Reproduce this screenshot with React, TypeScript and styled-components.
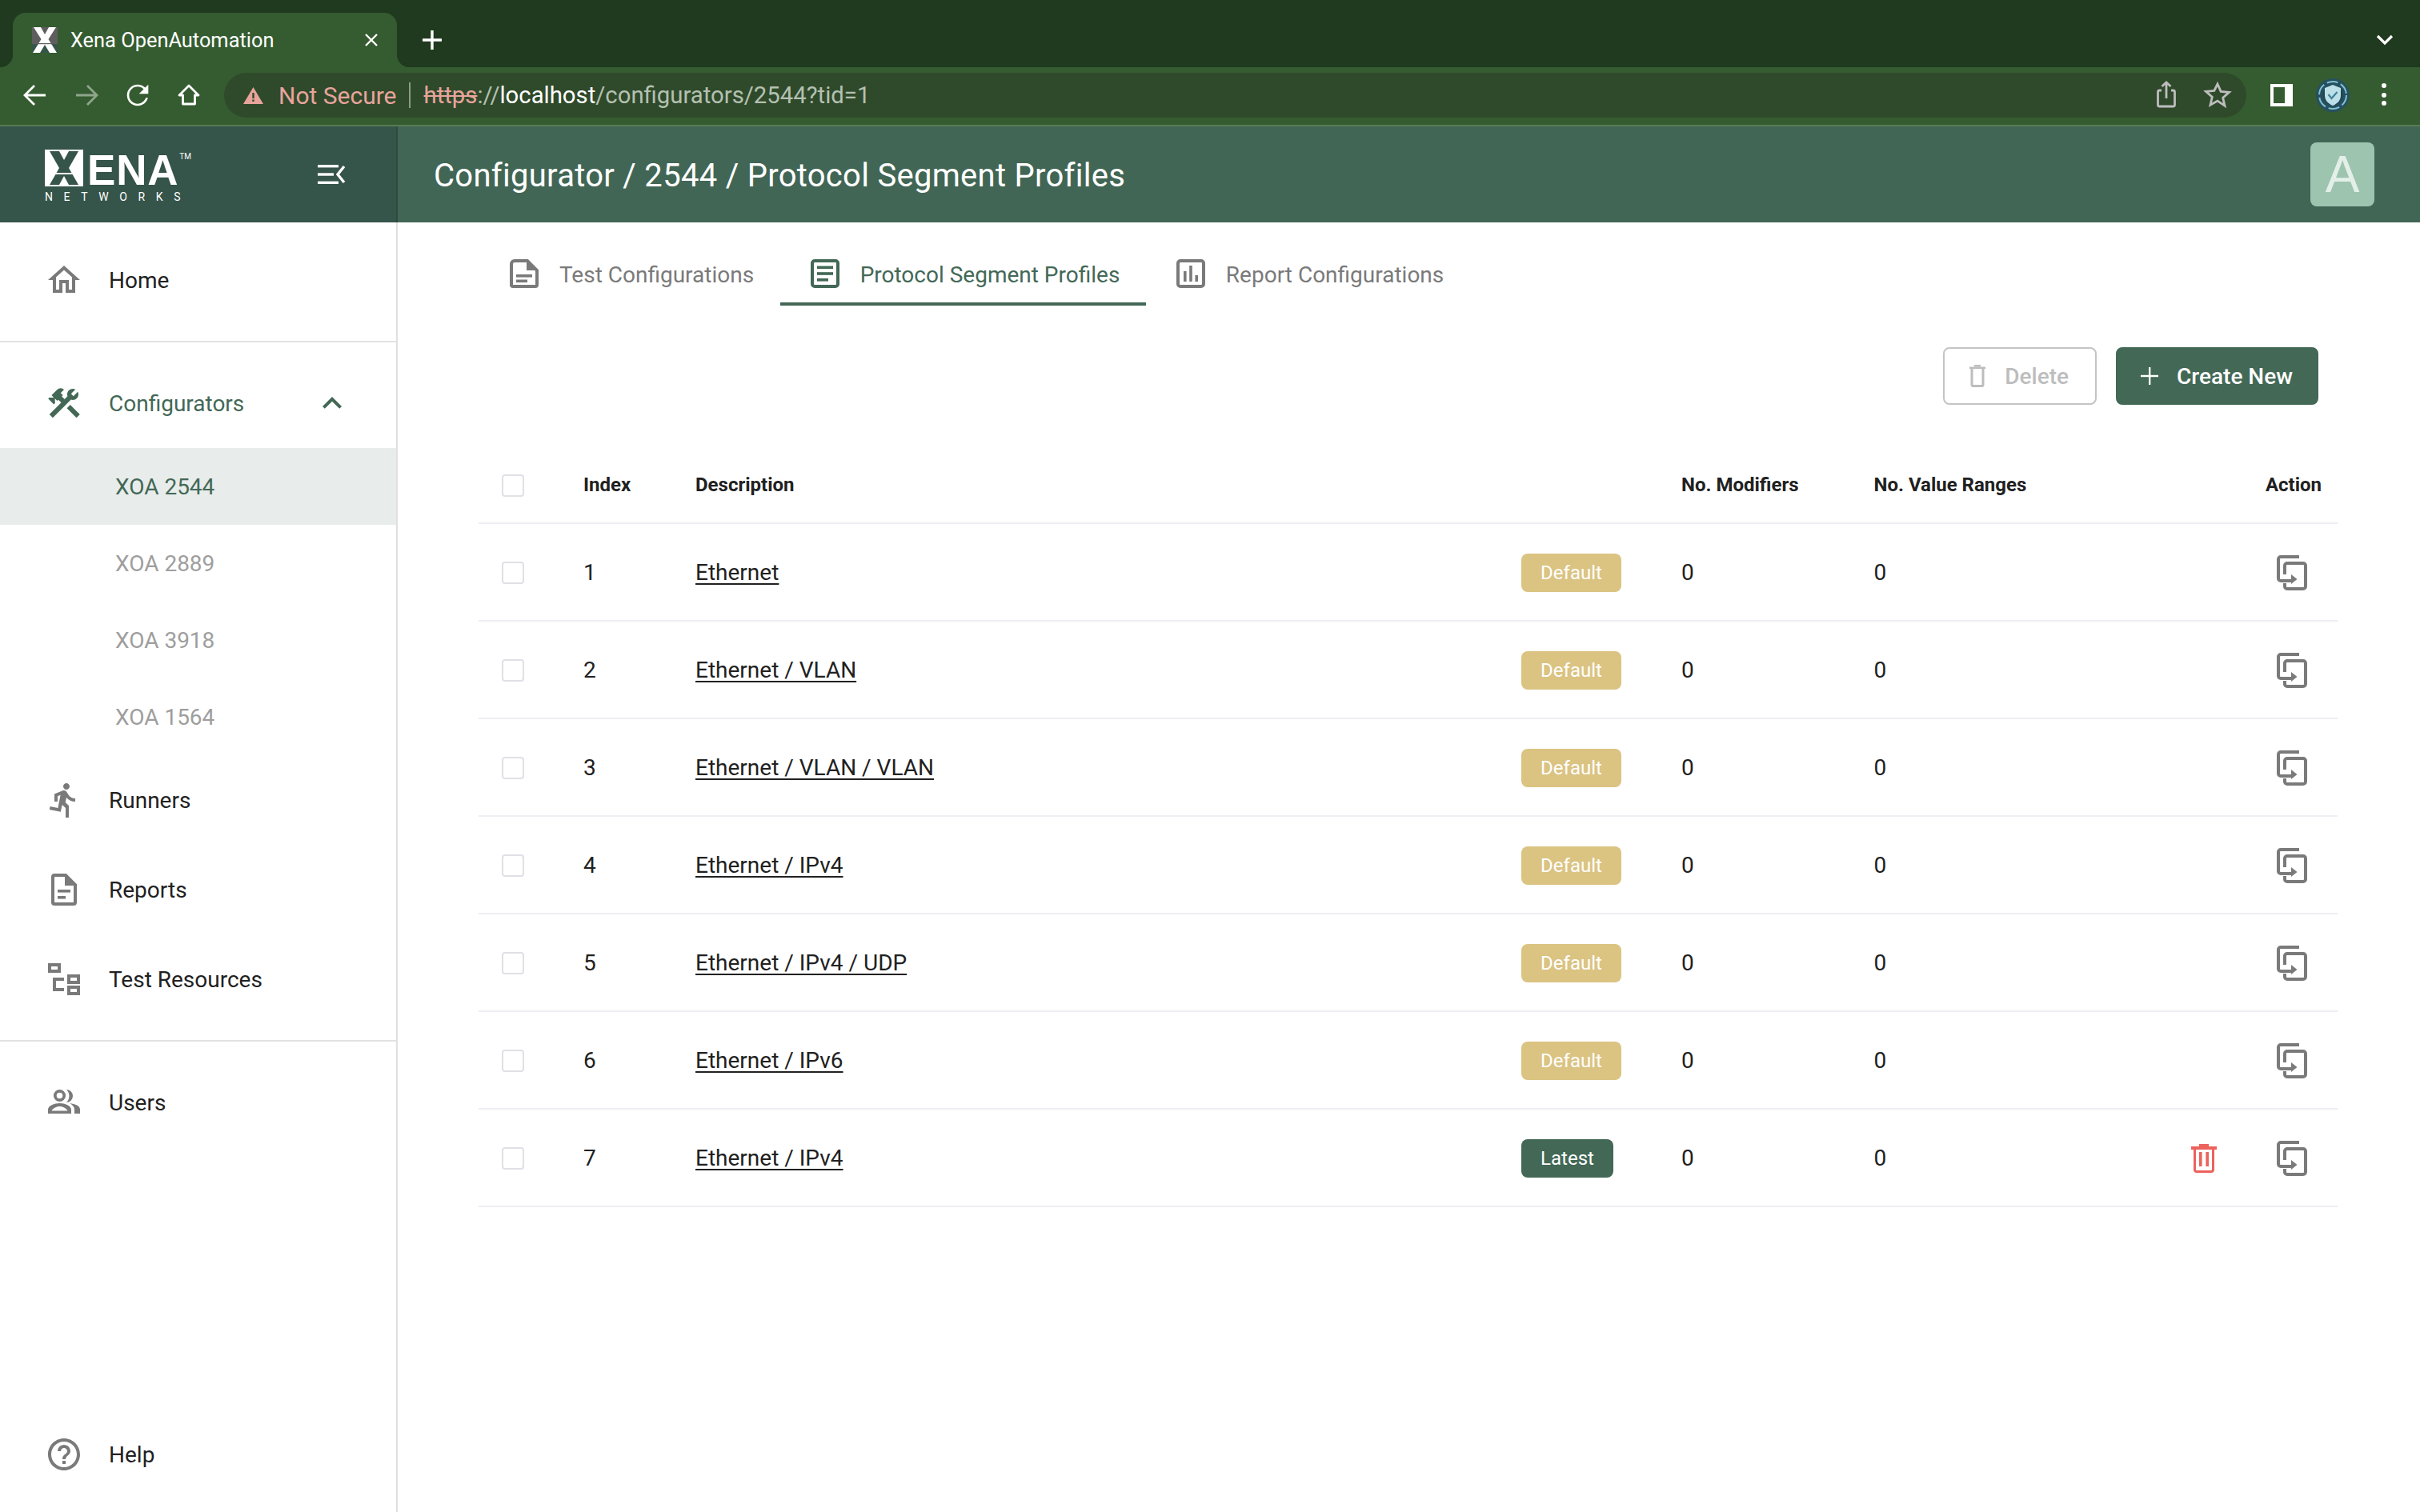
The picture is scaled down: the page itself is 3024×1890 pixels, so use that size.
import styled, { createGlobalStyle } from "styled-components";
import { MdConstruction, MdDirectionsRun, MdExpandLess, MdHelpOutline, MdOutlineHome } from "react-icons/md";

const GlobalStyle = createGlobalStyle`
    html, body {
        margin: 0;
        padding: 0;
        background: #fff;
        overflow: hidden;
    }
    * {
        box-sizing: border-box;
    }
`;

const Page = styled.div`
    width: 3024px;
    height: 1890px;
    display: flex;
    flex-direction: column;
    font-family: Roboto, "Liberation Sans", sans-serif;
    font-size: 28px;
    color: #212121;
`;

/* browser chrome */
const TabStrip = styled.div`
    height: 84px;
    flex: none;
    display: flex;
    align-items: flex-end;
    padding: 0 24px 0 16px;
    background: #203a1f;
    color: #fff;
`;

const BrowserTab = styled.div`
    position: relative;
    width: 480px;
    height: 68px;
    display: flex;
    align-items: center;
    gap: 16px;
    padding: 0 20px 0 24px;
    background: #355c30;
    border-radius: 16px 16px 0 0;
    font-size: 25.4px;

    &::before,
    &::after {
        content: "";
        position: absolute;
        bottom: 0;
        width: 16px;
        height: 16px;
    }
    &::before {
        right: 100%;
        background: radial-gradient(circle at 0 0, transparent 16px, #355c30 16.5px);
    }
    &::after {
        left: 100%;
        background: radial-gradient(circle at 100% 0, transparent 16px, #355c30 16.5px);
    }
`;

const TabClose = styled.svg`
    margin-left: auto;
    width: 24px;
    height: 24px;
`;

const StripButton = styled.svg<{ $push?: boolean }>`
    align-self: center;
    flex: none;
    width: 40px;
    height: 40px;
    margin-left: ${({ $push }) => ($push ? "auto" : "24px")};
    margin-top: 16px;
`;

const Toolbar = styled.div`
    height: 74px;
    flex: none;
    display: flex;
    align-items: center;
    gap: 24px;
    padding: 0 25px 2px 24px;
    background: #355c30;
    border-bottom: 2px solid #587c53;
`;

const ToolIcon = styled.svg`
    flex: none;
    width: 40px;
    height: 40px;
`;

const ExtensionIcon = styled.svg`
    flex: none;
    width: 44px;
    height: 44px;
    margin: 0 -2px;
`;

const Omnibox = styled.div`
    flex: 1;
    height: 56px;
    display: flex;
    align-items: center;
    padding: 0 16px 0 24px;
    border-radius: 28px;
    background: #2f4a2a;
    font-size: 29.3px;
    color: #b4c0b1;
    white-space: nowrap;
`;

const NotSecure = styled.span`
    margin-left: 19px;
    font-size: 30px;
    color: #e8a49c;
`;

const UrlDivider = styled.span`
    width: 2px;
    height: 32px;
    margin: 0 17px 0 15px;
    background: #8a9b86;
`;

const Struck = styled.span`
    color: #e8a49c;
    text-decoration: line-through;
`;

const Host = styled.span`
    color: #fff;
`;

const OmniActions = styled.div`
    margin-left: auto;
    display: flex;
    gap: 24px;
`;

/* app header */
const AppHeader = styled.header`
    height: 120px;
    flex: none;
    display: flex;
    background: #426655;
    color: #fff;
`;

const Brand = styled.div`
    width: 497px;
    flex: none;
    display: flex;
    align-items: center;
    justify-content: space-between;
    padding: 0 62px 0 56px;
    background: #35544a;
    border-right: 2px solid #2e4a40;
`;

const Logo = styled.div`
    display: flex;
    flex-direction: column;
    gap: 7px;
    margin-top: 2px;
`;

const LogoMark = styled.div`
    display: flex;
    align-items: flex-start;
    gap: 5px;
    height: 46px;
`;

const LogoWord = styled.span`
    font-family: "Liberation Sans", Arial, sans-serif;
    font-size: 53px;
    font-weight: 700;
    line-height: 52px;
    height: 46px;
    letter-spacing: 0.8px;
`;

const LogoTm = styled.span`
    font-size: 10px;
    line-height: 18px;
    margin-left: -4px;
`;

const LogoNetworks = styled.span`
    font-size: 14px;
    line-height: 12px;
    letter-spacing: 13.6px;
`;

const PageTitle = styled.h1`
    flex: 1;
    margin: 2px 0 0;
    padding-left: 45px;
    align-self: center;
    font-size: 40px;
    font-weight: 400;
    letter-spacing: 0.29px;
`;

const Avatar = styled.div`
    width: 80px;
    height: 80px;
    align-self: center;
    margin-right: 57px;
    display: flex;
    align-items: center;
    justify-content: center;
    border-radius: 8px;
    background: #9cc4ae;
    color: #e4efe9;
    font-family: "Liberation Sans", Arial, sans-serif;
    font-size: 64px;
`;

/* page body */
const Body = styled.div`
    flex: 1;
    display: flex;
    min-height: 0;
`;

const Sidebar = styled.nav`
    width: 497px;
    flex: none;
    display: flex;
    flex-direction: column;
    border-right: 2px solid #e0e0e0;
`;

const NavGroup = styled.div<{ $top: number; $bottom: number; $divided?: boolean }>`
    padding: ${({ $top, $bottom }) => `${$top}px 0 ${$bottom}px`};
    border-bottom: ${({ $divided }) => ($divided ? "2px solid #e2e2e2" : "none")};
`;

const NavRow = styled.div<{ $active?: boolean }>`
    height: 112px;
    display: flex;
    align-items: center;
    gap: 32px;
    padding: 0 56px;
    color: ${({ $active }) => ($active ? "#436856" : "#212121")};

    svg {
        flex: none;
        width: 48px;
        height: 48px;
        color: ${({ $active }) => ($active ? "#436856" : "#7a7a7a")};
    }
`;

const NavChevron = styled.span`
    margin-left: auto;
    display: flex;
`;

const SubItem = styled.div<{ $active?: boolean }>`
    height: 96px;
    display: flex;
    align-items: center;
    padding-left: 144px;
    background: ${({ $active }) => ($active ? "#e8ecea" : "transparent")};
    color: ${({ $active }) => ($active ? "#436856" : "#9e9e9e")};
`;

const HelpGroup = styled.div`
    margin-top: auto;
    padding-bottom: 16px;
`;

const Main = styled.main`
    flex: 1;
    min-width: 0;
    padding: 0 103px 0 100px;
`;

const Tabs = styled.div`
    display: flex;
    padding: 46px 0 0 2px;
`;

const TabItem = styled.div<{ $active?: boolean }>`
    display: flex;
    align-items: flex-start;
    gap: 26px;
    height: 58px;
    padding: 0 32.5px 0 38px;
    line-height: 39px;
    color: ${({ $active }) => ($active ? "#436856" : "#7a7a7a")};
    border-bottom: 4px solid ${({ $active }) => ($active ? "#436856" : "transparent")};

    svg {
        flex: none;
        width: 36px;
        height: 36px;
    }
`;

const Actions = styled.div`
    display: flex;
    justify-content: flex-end;
    gap: 24px;
    margin-top: 52px;
    padding-right: 24px;
`;

const ActionButton = styled.button<{ $primary?: boolean }>`
    height: 72px;
    display: flex;
    align-items: center;
    gap: ${({ $primary }) => ($primary ? "23px" : "24px")};
    padding: ${({ $primary }) => ($primary ? "0 30px 0 29px" : "0 33px 0 31px")};
    border-radius: 8px;
    border: 2px solid ${({ $primary }) => ($primary ? "#436856" : "#c4c4c4")};
    background: ${({ $primary }) => ($primary ? "#436856" : "#fff")};
    color: ${({ $primary }) => ($primary ? "#fff" : "#bdbdbd")};
    font-family: inherit;
    font-size: 28px;
    font-weight: 500;
`;

const Table = styled.div`
    margin: 52px 0 0 1px;
`;

const Row = styled.div<{ $head?: boolean }>`
    height: ${({ $head }) => ($head ? "97px" : "122px")};
    display: grid;
    grid-template-columns: 102px 140px 1032px 200px 240.5px 1fr auto;
    align-items: center;
    padding-left: 29px;
    border-bottom: 2px solid #eeedf3;
    font-size: ${({ $head }) => ($head ? "24px" : "28px")};
    font-weight: ${({ $head }) => ($head ? 700 : 400)};
`;

const Check = styled.span`
    width: 28px;
    height: 28px;
    margin-top: 2px;
    border: 2px solid #e0e0e6;
    border-radius: 4px;
`;

const ProfileLink = styled.a`
    color: #212121;
    text-decoration: underline;
    text-underline-offset: 4px;
    text-decoration-thickness: 2px;
`;

const Badge = styled.span<{ $latest?: boolean }>`
    justify-self: start;
    height: 48px;
    width: ${({ $latest }) => ($latest ? "115px" : "125px")};
    margin-top: 2px;
    display: flex;
    align-items: center;
    justify-content: center;
    border-radius: 8px;
    background: ${({ $latest }) => ($latest ? "#436856" : "#dbc382")};
    color: #fff;
    font-size: 24px;
`;

const HeadAction = styled.span`
    padding-right: 20px;
    text-align: right;
`;

const RowActions = styled.span`
    display: flex;
    justify-content: flex-end;
    align-items: center;
    gap: 75px;
    margin-top: 2px;
    padding-right: 38px;
`;

const DocIcon = () => (
    <svg viewBox="0 0 36 36">
        <path
            d="M6 2h16l12 12v18a2 2 0 0 1-2 2H4a2 2 0 0 1-2-2V6a4 4 0 0 1 4-4z"
            fill="none"
            stroke="currentColor"
            strokeWidth="4"
        />
        <path d="M21 2l13 12H21z" fill="currentColor" />
        <rect x="8" y="19" width="20" height="3.6" fill="currentColor" />
        <rect x="8" y="25.5" width="14" height="3.6" fill="currentColor" />
    </svg>
);

const ArticleIcon = () => (
    <svg viewBox="0 0 36 36">
        <rect x="2" y="2" width="32" height="32" rx="3" fill="none" stroke="currentColor" strokeWidth="4" />
        <rect x="8" y="8.5" width="20" height="3.6" fill="currentColor" />
        <rect x="8" y="16.2" width="20" height="3.6" fill="currentColor" />
        <rect x="8" y="24" width="14" height="3.6" fill="currentColor" />
    </svg>
);

const ChartIcon = () => (
    <svg viewBox="0 0 36 36">
        <rect x="2" y="2" width="32" height="32" rx="3" fill="none" stroke="currentColor" strokeWidth="4" />
        <rect x="9" y="15" width="3.6" height="13" fill="currentColor" />
        <rect x="16.2" y="8" width="3.6" height="20" fill="currentColor" />
        <rect x="23.4" y="20" width="3.6" height="8" fill="currentColor" />
    </svg>
);

const ReportIcon = () => (
    <svg viewBox="0 0 48 48">
        <path
            d="M12 6h14l12 12v22a2 2 0 0 1-2 2H12a2 2 0 0 1-2-2V8a2 2 0 0 1 2-2z"
            fill="none"
            stroke="currentColor"
            strokeWidth="4"
        />
        <path d="M25 5l14 14H25z" fill="currentColor" />
        <rect x="16" y="24" width="16" height="3.6" fill="currentColor" />
        <rect x="16" y="32" width="10" height="3.6" fill="currentColor" />
    </svg>
);

const ResourcesIcon = () => (
    <svg viewBox="0 0 48 48" fill="none" stroke="currentColor" strokeWidth="4">
        <rect x="6" y="6" width="12" height="8" />
        <rect x="30" y="20" width="12" height="8" />
        <rect x="30" y="34" width="12" height="8" />
        <path d="M24 24H12v13h12" />
    </svg>
);

const UsersIcon = () => (
    <svg viewBox="0 0 48 48" fill="currentColor">
        <circle cx="18.500" cy="15.500" r="5.700" fill="none" stroke="currentColor" strokeWidth="3.800" />
        <path d="M27 8a8 8 0 0 1 0 16 11 11 0 0 0 0-16z" />
        <path
            fillRule="evenodd"
            d="M4 38v-5c0-5 8-8 14.500-8S33 28 33 33v5zM8.500 34.500h20c-1-3-6-5.500-10-5.500s-9 2.500-10 5.500z"
        />
        <path d="M31 25c7 1 13 3 13 8v5h-7v-5c0-3-2-6-6-8z" />
    </svg>
);

const MenuCollapseIcon = () => (
    <svg width="36" height="24" viewBox="0 0 36 24" fill="#fff">
        <rect x="0" y="0" width="26" height="3.4" />
        <rect x="0" y="10.3" width="20" height="3.4" />
        <rect x="0" y="20.6" width="26" height="3.4" />
        <path d="M33 2L25 12l8 10" fill="none" stroke="#fff" strokeWidth="3.4" />
    </svg>
);

const CopyIcon = () => (
    <svg width="38" height="44" viewBox="0 0 38 44" fill="none" stroke="#7a7a7a" strokeWidth="4">
        <path d="M28 2H5a3 3 0 0 0-3 3v24a3 3 0 0 0 3 3h14" />
        <path d="M10 24V13a3 3 0 0 1 3-3h20a3 3 0 0 1 3 3v26a3 3 0 0 1-3 3H13a3 3 0 0 1-3-3v-4" />
        <path d="M18 24l7.5 6-7.5 6z" fill="#7a7a7a" stroke="none" />
    </svg>
);

const TrashIcon = () => (
    <svg width="32" height="36" viewBox="0 0 32 36" fill="#ec625c">
        <rect x="10" y="0" width="12" height="3.5" />
        <rect x="0" y="3" width="32" height="4" />
        <path d="M4.500 6v26a2.500 2.500 0 0 0 2.500 2.500h18a2.500 2.500 0 0 0 2.500-2.500V6" fill="none" stroke="#ec625c" strokeWidth="3" />
        <rect x="10" y="10" width="3.6" height="18" />
        <rect x="18.4" y="10" width="3.6" height="18" />
    </svg>
);

const ButtonTrashIcon = () => (
    <svg width="20" height="28" viewBox="0 0 20 28" fill="#bdbdbd">
        <rect x="6" y="0" width="8" height="2.5" />
        <rect x="0" y="2.5" width="20" height="2.6" />
        <path d="M3 5v20a1.600 1.600 0 0 0 1.600 1.600h10.800A1.600 1.600 0 0 0 17 25V5" fill="none" stroke="#bdbdbd" strokeWidth="3" />
    </svg>
);

const PlusIcon = () => (
    <svg width="22" height="22" viewBox="0 0 22 22" fill="#fff">
        <rect x="10" y="0" width="2.4" height="22" />
        <rect x="0" y="9.8" width="22" height="2.4" />
    </svg>
);

const rows = [
    { id: 1, name: "Ethernet" },
    { id: 2, name: "Ethernet / VLAN" },
    { id: 3, name: "Ethernet / VLAN / VLAN" },
    { id: 4, name: "Ethernet / IPv4" },
    { id: 5, name: "Ethernet / IPv4 / UDP" },
    { id: 6, name: "Ethernet / IPv6" },
    { id: 7, name: "Ethernet / IPv4", latest: true },
];

export default function App() {
    return (
        <Page>
            <GlobalStyle />
            <TabStrip>
                <BrowserTab>
                    <svg width="32" height="32" viewBox="0 0 32 32">
                        <rect width="32" height="32" fill="#5e5e5e" />
                        <rect y="21" width="32" height="11" fill="#35544a" />
                        <path d="M2 0h9l5 9 5-9h9l-9.500 15L31 32h-9l-6-10-6 10H1l10.500-17z" fill="#fff" />
                        <rect y="20" width="32" height="1.2" fill="#5e5e5e" />
                    </svg>
                    <span>Xena OpenAutomation</span>
                    <TabClose viewBox="0 0 24 24">
                        <path d="M5 5l14 14M19 5L5 19" stroke="#fff" strokeWidth="2.4" />
                    </TabClose>
                </BrowserTab>
                <StripButton viewBox="0 0 40 40">
                    <path d="M20 8v24M8 20h24" stroke="#fff" strokeWidth="3.4" />
                </StripButton>
                <StripButton $push viewBox="0 0 40 40">
                    <path d="M11 15l9 9 9-9" fill="none" stroke="#fff" strokeWidth="3.2" />
                </StripButton>
            </TabStrip>
            <Toolbar>
                <ToolIcon viewBox="0 0 40 40">
                    <path d="M33 20H8M19 8L7 20l12 12" fill="none" stroke="#fff" strokeWidth="2.8" />
                </ToolIcon>
                <ToolIcon viewBox="0 0 40 40">
                    <path d="M7 20h25M21 8l12 12-12 12" fill="none" stroke="#8fa58c" strokeWidth="2.8" />
                </ToolIcon>
                <ToolIcon viewBox="0 0 24 24">
                    <path
                        d="M17.65 6.35C16.2 4.9 14.21 4 12 4c-4.42 0-7.99 3.58-7.99 8s3.57 8 7.99 8c3.73 0 6.84-2.55 7.73-6h-1.6c-.82 2.33-3.04 4.4-6.13 4.4-3.53 0-6.4-2.87-6.4-6.4s2.87-6.4 6.4-6.4c1.76 0 3.3.72 4.5 1.9L13 11h7V4l-2.35 2.35z"
                        fill="#fff"
                    />
                </ToolIcon>
                <ToolIcon viewBox="0 0 40 40">
                    <path d="M20 8L8 20h4.500v11h15V20H32z" fill="none" stroke="#fff" strokeWidth="2.8" strokeLinejoin="round" />
                </ToolIcon>
                <Omnibox>
                    <svg width="25" height="21" viewBox="0 0 25 21">
                        <path d="M12.500 0L25 21H0z" fill="#e8a49c" />
                        <rect x="11.3" y="7" width="2.4" height="7" fill="#2f4a2a" />
                        <rect x="11.3" y="15.5" width="2.4" height="2.4" fill="#2f4a2a" />
                    </svg>
                    <NotSecure>Not Secure</NotSecure>
                    <UrlDivider />
                    <Struck>https</Struck>
                    <span>://</span>
                    <Host>localhost</Host>
                    <span>/configurators/2544?tid=1</span>
                    <OmniActions>
                        <ToolIcon viewBox="0 0 40 40">
                            <path
                                d="M14 15h-2.500a2 2 0 0 0-2 2v16a2 2 0 0 0 2 2h17a2 2 0 0 0 2-2V17a2 2 0 0 0-2-2H26M20 25V5M14.500 10L20 5l5.500 5"
                                transform="translate(0 -1)"
                                fill="none"
                                stroke="#bdbdbd"
                                strokeWidth="2.8"
                            />
                        </ToolIcon>
                        <ToolIcon viewBox="0 0 40 40">
                            <path
                                d="M20 6l4.200 9.400 10.300 1-7.800 6.800 2.300 10L20 27.100l-9 5.100 2.300-10-7.800-6.800 10.300-1z"
                                fill="none"
                                stroke="#bdbdbd"
                                strokeWidth="2.8"
                            />
                        </ToolIcon>
                    </OmniActions>
                </Omnibox>
                <ToolIcon viewBox="0 0 40 40">
                    <rect x="6" y="6" width="28" height="28" fill="#fff" />
                    <rect x="10" y="10" width="14" height="20" fill="#355c30" />
                </ToolIcon>
                <ExtensionIcon viewBox="-2 -2 44 44">
                    <circle cx="20" cy="20" r="21" fill="#26505f" />
                    <circle cx="20" cy="20" r="17" fill="none" stroke="#7fc0cf" strokeWidth="2" strokeDasharray="14 4" />
                    <circle cx="20" cy="20" r="12.500" fill="#1f4654" />
                    <path d="M20 7l10 4v9c0 7-5 11-10 13-5-2-10-6-10-13v-9z" fill="#bcdfe8" />
                    <path d="M14.500 19l4 5 7-8" fill="none" stroke="#3f8296" strokeWidth="2.200" />
                </ExtensionIcon>
                <ToolIcon viewBox="0 0 40 40">
                    <circle cx="20" cy="8" r="3" fill="#fff" />
                    <circle cx="20" cy="20" r="3" fill="#fff" />
                    <circle cx="20" cy="30" r="3" fill="#fff" />
                </ToolIcon>
            </Toolbar>
            <AppHeader>
                <Brand>
                    <Logo>
                        <LogoMark>
                            <svg width="48" height="46" viewBox="0 0 48 46">
                                <rect width="48" height="46" fill="#fff" />
                                <path d="M6 2h12l6 11 6-11h12L30 23l12 21H30l-6-11-6 11H6l12-21z" fill="#35544a" />
                                <rect y="29" width="48" height="2" fill="#fff" />
                            </svg>
                            <LogoWord>ENA</LogoWord>
                            <LogoTm>TM</LogoTm>
                        </LogoMark>
                        <LogoNetworks>NETWORKS</LogoNetworks>
                    </Logo>
                    <MenuCollapseIcon />
                </Brand>
                <PageTitle>Configurator / 2544 / Protocol Segment Profiles</PageTitle>
                <Avatar>A</Avatar>
            </AppHeader>
            <Body>
                <Sidebar>
                    <NavGroup $top={16} $bottom={20} $divided>
                        <NavRow>
                            <MdOutlineHome />
                            Home
                        </NavRow>
                    </NavGroup>
                    <NavGroup $top={20} $bottom={20} $divided>
                        <NavRow $active>
                            <MdConstruction />
                            Configurators
                            <NavChevron>
                                <MdExpandLess />
                            </NavChevron>
                        </NavRow>
                        <SubItem $active>XOA 2544</SubItem>
                        <SubItem>XOA 2889</SubItem>
                        <SubItem>XOA 3918</SubItem>
                        <SubItem>XOA 1564</SubItem>
                        <NavRow>
                            <MdDirectionsRun />
                            Runners
                        </NavRow>
                        <NavRow>
                            <ReportIcon />
                            Reports
                        </NavRow>
                        <NavRow>
                            <ResourcesIcon />
                            Test Resources
                        </NavRow>
                    </NavGroup>
                    <NavGroup $top={20} $bottom={0}>
                        <NavRow>
                            <UsersIcon />
                            Users
                        </NavRow>
                    </NavGroup>
                    <HelpGroup>
                        <NavRow>
                            <MdHelpOutline />
                            Help
                        </NavRow>
                    </HelpGroup>
                </Sidebar>
                <Main>
                    <Tabs>
                        <TabItem>
                            <DocIcon />
                            Test Configurations
                        </TabItem>
                        <TabItem $active>
                            <ArticleIcon />
                            Protocol Segment Profiles
                        </TabItem>
                        <TabItem>
                            <ChartIcon />
                            Report Configurations
                        </TabItem>
                    </Tabs>
                    <Actions>
                        <ActionButton>
                            <ButtonTrashIcon />
                            Delete
                        </ActionButton>
                        <ActionButton $primary>
                            <PlusIcon />
                            Create New
                        </ActionButton>
                    </Actions>
                    <Table>
                        <Row $head>
                            <Check />
                            <span>Index</span>
                            <span>Description</span>
                            <span />
                            <span>No. Modifiers</span>
                            <span>No. Value Ranges</span>
                            <HeadAction>Action</HeadAction>
                        </Row>
                        {rows.map(({ id, name, latest }) => (
                            <Row key={id}>
                                <Check />
                                <span>{id}</span>
                                <span>
                                    <ProfileLink>{name}</ProfileLink>
                                </span>
                                <Badge $latest={latest}>{latest ? "Latest" : "Default"}</Badge>
                                <span>0</span>
                                <span>0</span>
                                <RowActions>
                                    {latest && <TrashIcon />}
                                    <CopyIcon />
                                </RowActions>
                            </Row>
                        ))}
                    </Table>
                </Main>
            </Body>
        </Page>
    );
}
